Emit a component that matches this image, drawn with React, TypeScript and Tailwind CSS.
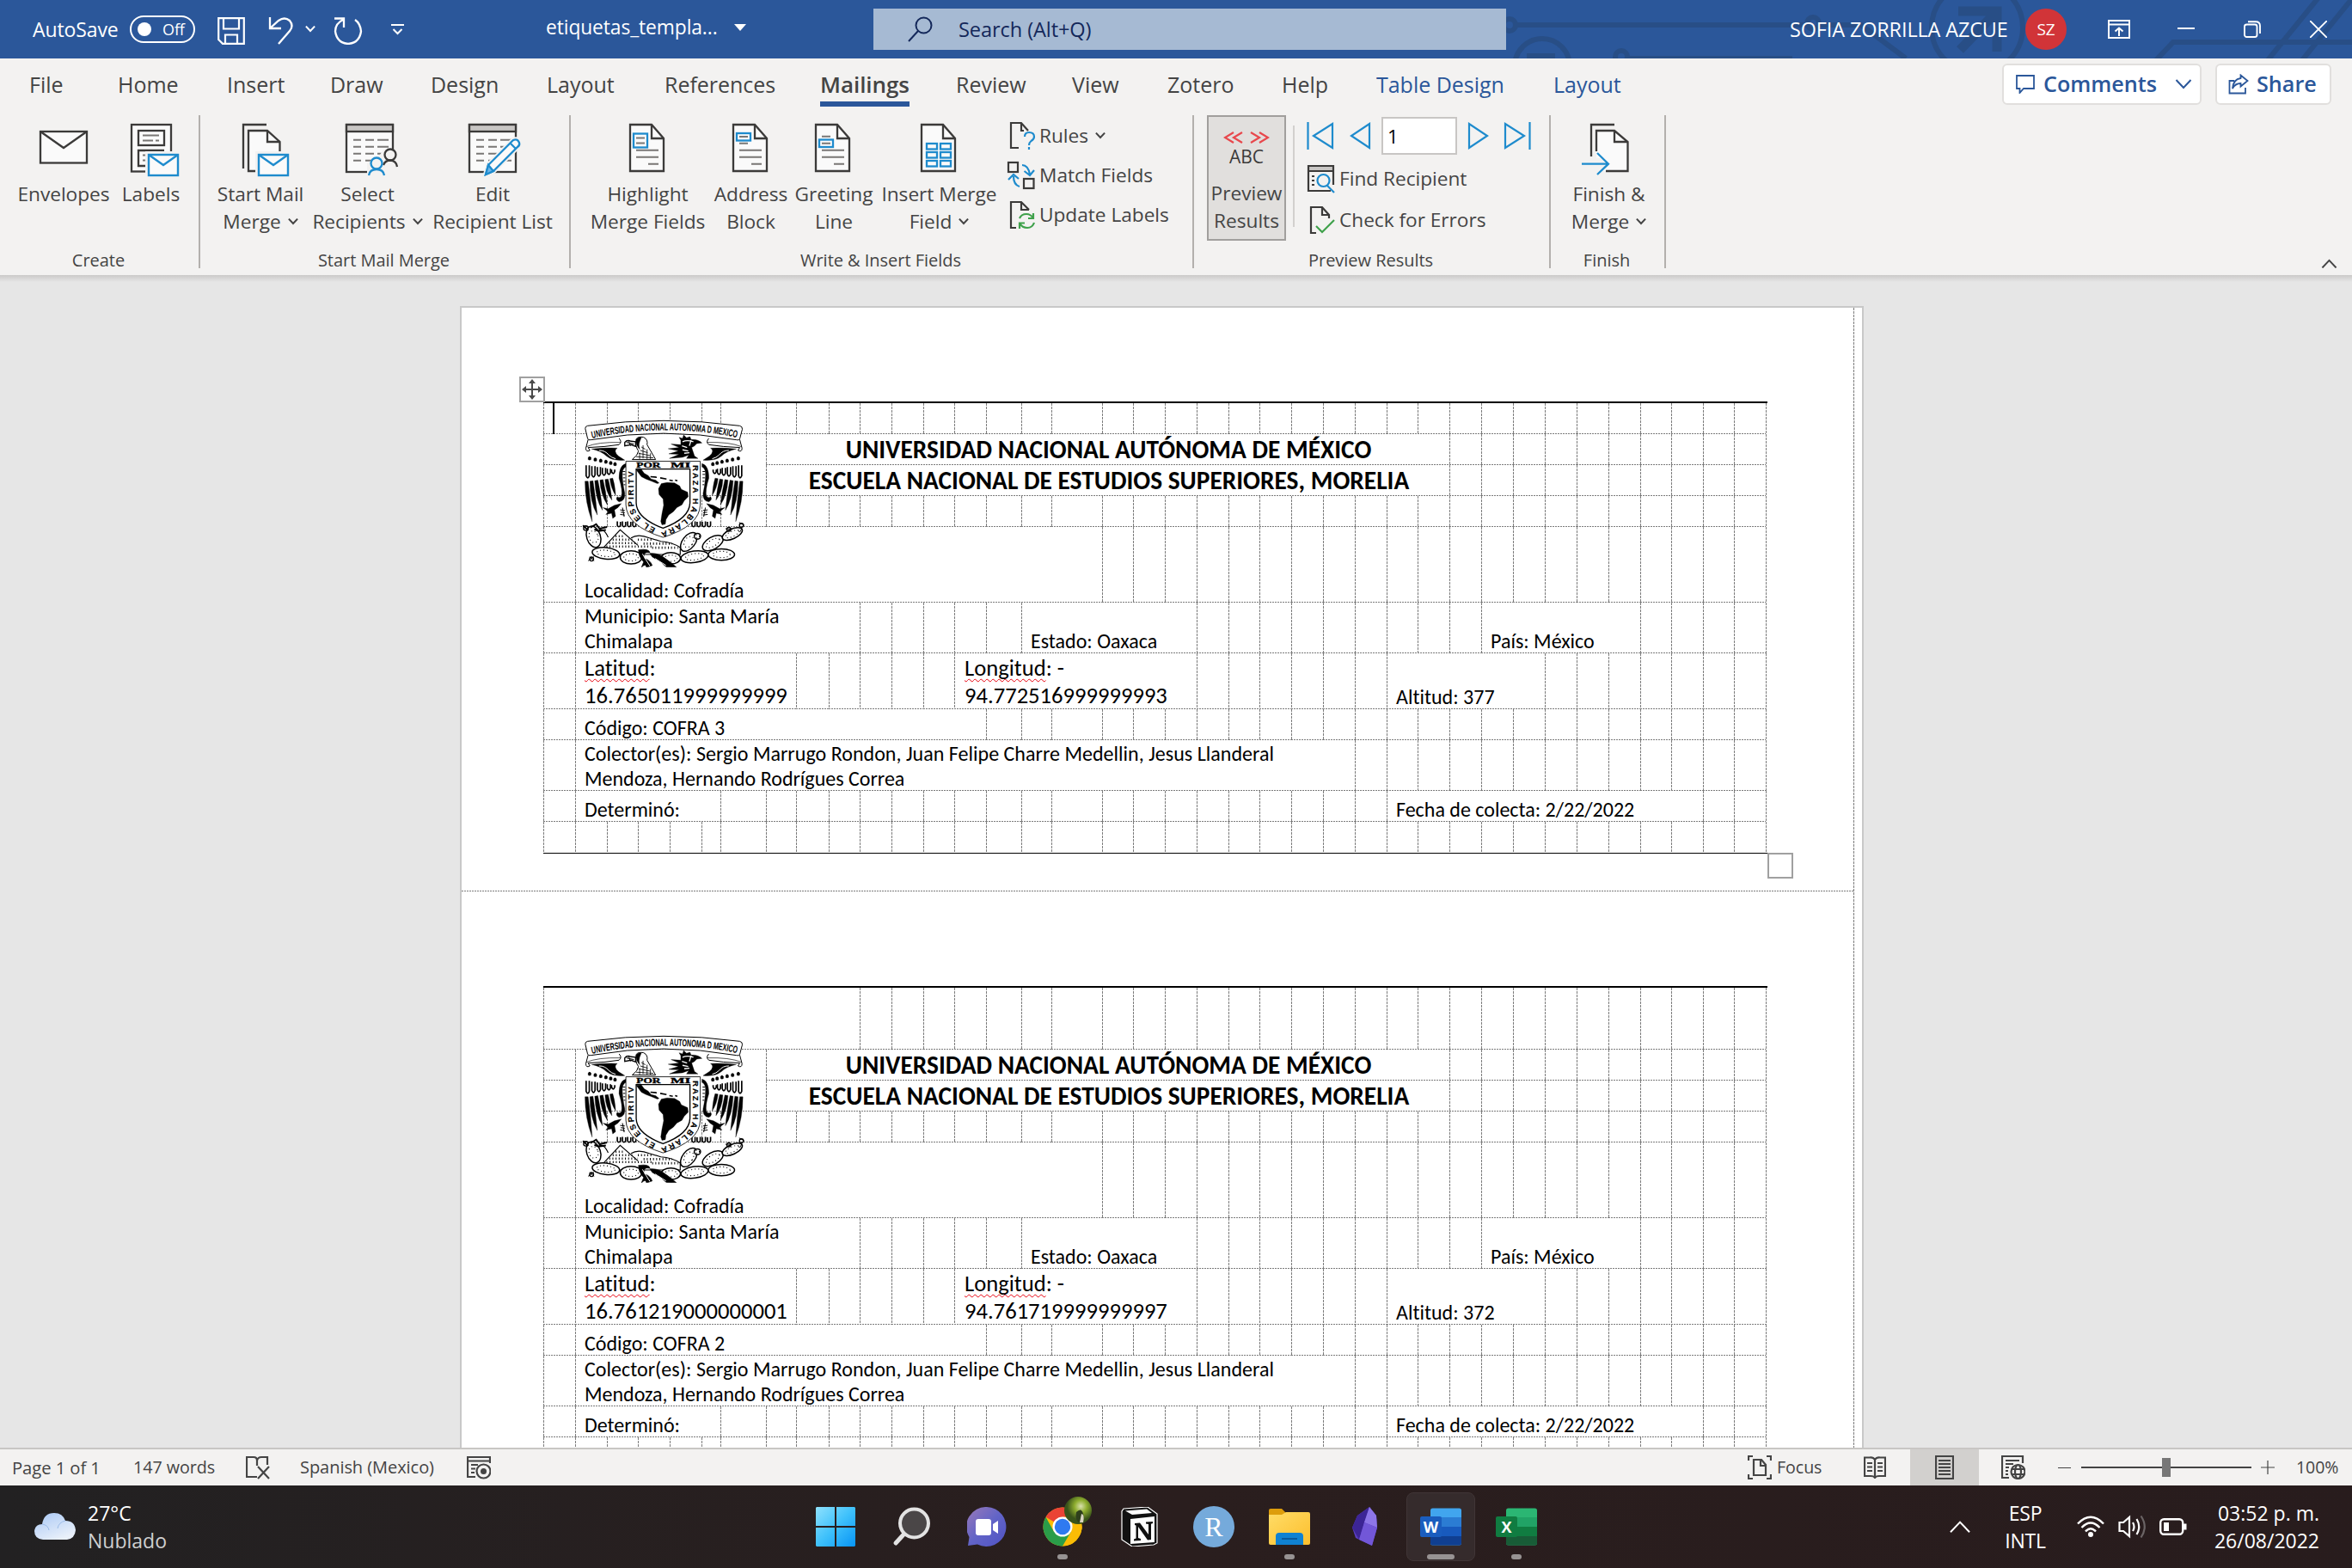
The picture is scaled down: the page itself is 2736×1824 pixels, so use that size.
import React from "react";

const INK = "#3b3a39";
const BLUE = "#1e8bcd";
const PAPER = "#fafafa";

/* ---------- shared pieces ---------- */

function Chevron({ className = "", up = false, w = 12 }: { className?: string; up?: boolean; w?: number }) {
  return (
    <svg className={className} width={w} height={w * 0.6} viewBox="0 0 20 12" fill="none" stroke="currentColor" strokeWidth={40 / w}>
      <path d={up ? "M1.5 11 10 2l8.500 9" : "M1.500 1 10 10l8.500-9"} />
    </svg>
  );
}

function MiniEnvelope({ x, y }: { x: number; y: number }) {
  return (
    <g transform={`translate(${x} ${y})`} stroke={BLUE} strokeWidth="2.4" fill={PAPER}>
      <rect x="-3" y="-3" width="42" height="32" fill="#f3f2f1" stroke="none" />
      <rect x="1" y="1" width="34" height="24" />
      <path d="M1 1 18 13 35 1" fill="none" />
    </g>
  );
}

function BigIcon({ children }: { children: React.ReactNode }) {
  return (
    <svg width="64" height="64" viewBox="0 0 64 64" className="shrink-0 overflow-visible" fill="none" stroke={INK} strokeWidth="2.300">
      {children}
    </svg>
  );
}

function DocShape() {
  return (
    <>
      <path d="M11 3H36L50 19V57H11Z" fill={PAPER} />
      <path d="M36 3V19H50" />
    </>
  );
}

function ListShape({ x }: { x: number }) {
  return (
    <g transform={`translate(${x} 0)`}>
      <rect x="1" y="3" width="54" height="55" fill={PAPER} />
      <rect x="1" y="3" width="54" height="8" fill="#c8c6c4" />
      <g stroke="#797775" strokeWidth="2">
        {[20.700, 28.700, 36.700, 44.700].map((y) => (
          <path key={y} d={`M9 ${y}H18M23 ${y}H33M37 ${y}H50`} />
        ))}
      </g>
    </g>
  );
}

const icons: Record<string, React.ReactNode> = {
  envelope: (
    <BigIcon>
      <rect x="5" y="11" width="54" height="36.500" fill={PAPER} />
      <path d="M5 11 32 30 59 11" />
    </BigIcon>
  ),
  labels: (
    <BigIcon>
      <rect x="9" y="3" width="46" height="54.500" fill={PAPER} />
      <rect x="17" y="10" width="30" height="17" />
      <path d="M47 33H17V51H28" />
      <path d="M22 15.500H41M22 21.500H34M37 21.500H41M22 38.500H28M22 44.500H28" stroke="#797775" strokeWidth="2" />
      <MiniEnvelope x={28} y={37} />
    </BigIcon>
  ),
  startMerge: (
    <BigIcon>
      <path d="M39 3H12V54" />
      <path d="M18 10H40L54.500 23V57H18Z" fill={PAPER} />
      <path d="M40 10V23H54.500" />
      <MiniEnvelope x={29} y={37} />
    </BigIcon>
  ),
  recipients: (
    <BigIcon>
      <ListShape x={6} />
      <path d="M50 32H72V60H31V48L46 38Z" fill="#f3f2f1" stroke="none" />
      <circle cx="58" cy="38" r="6.500" />
      <path d="M50 50Q52 44.500 58 44.500Q65 45 66 52" />
      <g stroke={BLUE}>
        <circle cx="42" cy="48" r="6.500" fill="#f3f2f1" />
        <path d="M33 62Q34 55 42 55Q50 55 51 62" />
      </g>
    </BigIcon>
  ),
  editList: (
    <BigIcon>
      <ListShape x={4} />
      <path d="M24 61 27 50 56 21Q61 19 63 24Q64 27 61 29L33 57Z" fill={PAPER} stroke="#f3f2f1" strokeWidth="6" />
      <path d="M24 61 27 50 56 21Q61 19 63 24Q64 27 61 29L33 57Z" fill={PAPER} stroke={BLUE} />
      <path d="M24 61 27 50 33 57Z" fill="#6cb5e8" stroke={BLUE} />
      <path d="M53 25 59 31" stroke={BLUE} />
    </BigIcon>
  ),
  highlight: (
    <BigIcon>
      <DocShape />
      <path d="M18 18.500H28M18 24.500H28M18 32.700H44M18 40.700H44M32 48.700H44" stroke="#797775" strokeWidth="2" />
      <rect x="15" y="13.500" width="16" height="16" stroke={BLUE} />
    </BigIcon>
  ),
  address: (
    <BigIcon>
      <DocShape />
      <path d="M18 17H28M18 24.700H28M18 32.700H44M18 40.700H44M32 48.700H44" stroke="#797775" strokeWidth="2" />
      <rect x="15" y="13" width="16" height="8.500" stroke={BLUE} />
    </BigIcon>
  ),
  greeting: (
    <BigIcon>
      <DocShape />
      <path d="M18 16.700H28M18 24.700H28M18 32.700H44M18 40.700H44M32 48.700H44" stroke="#797775" strokeWidth="2" />
      <rect x="15" y="20.500" width="16" height="8.500" stroke={BLUE} />
    </BigIcon>
  ),
  insertField: (
    <BigIcon>
      <DocShape />
      <g stroke={BLUE}>
        {[25, 35, 45].map((y) => (
          <React.Fragment key={y}>
            <rect x="17" y={y} width="12" height="6.500" />
            <rect x="33" y={y} width="12" height="6.500" />
          </React.Fragment>
        ))}
      </g>
    </BigIcon>
  ),
  finish: (
    <BigIcon>
      <path d="M38 3H11V40" />
      <path d="M17 10H38L53.500 23V57H17Z" fill={PAPER} stroke="none" />
      <path d="M17 34V10H38L53.500 23V57H28M38 10V23H53.500" />
      <path d="M10 42H22L32 49 22 60H10Z" fill="#f3f2f1" stroke="none" />
      <path d="M0 48.700H31M18 36 31 48.700 18 61" stroke={BLUE} />
    </BigIcon>
  ),
};

/* ---------- title bar ---------- */

function TitleBar() {
  return (
    <header className="relative flex h-[68px] shrink-0 items-center bg-[#2b579a] text-[23px] tracking-[-0.1px] text-white">
      <svg className="absolute right-0 top-0" width="1036" height="68" viewBox="1700 0 1036 68" fill="none" stroke="#284e86" strokeWidth="6">
        <circle cx="1756" cy="29" r="7" />
        <path d="M1765 29H2101M2118 29H2165L2217 68" />
        <circle cx="2109" cy="27" r="7" />
        <circle cx="1794" cy="77" r="32" />
        <path d="M1776 65H1809" />
        <circle cx="1886" cy="66" r="7" />
        <path d="M1895 68H2085" />
        <circle cx="2300" cy="32" r="53" />
        <path d="M2278 13H2323V60M2323 13 2280 58" strokeWidth="11" />
        <path d="M2508 70 2528 49H2736M2638 70 2698 -4M2678 70 2738 -4" />
      </svg>
      <div className="relative flex w-[1016px] items-center">
        <span className="ml-[38px] w-[113px]">AutoSave</span>
        <span className="flex h-8 w-[76px] items-center rounded-full border-2 border-white pl-[7px] text-[18px]">
          <span className="size-4 rounded-full bg-white" />
          <span className="ml-[13px]">Off</span>
        </span>
        <svg className="ml-[26px] mt-1" width="32" height="32" viewBox="0 0 32 32" fill="none" stroke="white" strokeWidth="2.200">
          <path d="M1.200 1.200H30.800V30.800H6L1.200 26ZM7 1.200V13.500H25V1.200M9 30.800V20.500H23V30.800" />
        </svg>
        <svg className="ml-[27px] mt-1" width="30" height="32" viewBox="0 0 30 32" fill="none" stroke="white" strokeWidth="2.300">
          <path d="M2 0V13H15M2 13 12 4Q19-1 25 4Q30 10 25 16L12 31" />
        </svg>
        <Chevron className="ml-[13px]" />
        <svg className="ml-[21px] mt-1" width="34" height="32" viewBox="0 0 34 32" fill="none" stroke="white" strokeWidth="2.300">
          <path d="M1 1.500H12V12M12 2.500Q2 7 2 16.500Q4 30 17 31Q30 30 32 16.500Q31 7 25 3" />
        </svg>
        <svg className="ml-[33px]" width="15" height="13" viewBox="0 0 15 13" fill="none" stroke="white" strokeWidth="2">
          <path d="M0 1H15M2.500 6 7.500 11 12.500 6" />
        </svg>
        <span className="-mt-1 ml-[165px] w-[219px] text-[22.800px]">etiquetas_templa...</span>
        <svg width="14" height="8" viewBox="0 0 14 8" className="-mt-1" fill="white">
          <path d="M0 0H14L7 8Z" />
        </svg>
      </div>
      <div className="relative flex h-12 w-[736px] items-center bg-[#a6bad3] pl-10 text-[#14285a]">
        <svg width="30" height="30" viewBox="0 0 30 30" fill="none" stroke="currentColor" strokeWidth="2">
          <circle cx="18.500" cy="10.500" r="9" />
          <path d="M12 17 1 29" />
        </svg>
        <span className="ml-[29px] pt-px text-[23.600px]">Search (Alt+Q)</span>
      </div>
      <div className="relative flex flex-1 items-center pl-[330px]">
        <span className="w-[274px] pt-[2px] text-[23.400px]">SOFIA ZORRILLA AZCUE</span>
        <span className="flex size-12 items-center justify-center rounded-full bg-[#d13438] text-[19px]">SZ</span>
        <svg className="ml-12" width="26" height="22" viewBox="0 0 26 22" fill="none" stroke="white" strokeWidth="2">
          <path d="M1 1H25V21H1ZM1 5.500H25M13 19V9.500M8.500 13.500 13 9.500 17.500 13.500" />
        </svg>
        <svg className="ml-[55px]" width="20" height="20" viewBox="0 0 20 20" stroke="white" strokeWidth="2">
          <path d="M0 9H20" />
        </svg>
        <svg className="ml-[57px]" width="20" height="20" viewBox="0 0 20 20" fill="none" stroke="white" strokeWidth="1.900">
          <rect x="1" y="4.500" width="14.500" height="14.500" rx="2.500" />
          <path d="M5 1.200H14Q19 1.200 19 6V15" />
        </svg>
        <svg className="ml-[57px]" width="20" height="20" viewBox="0 0 20 20" stroke="white" strokeWidth="1.900">
          <path d="M0 0 20 20M20 0 0 20" />
        </svg>
      </div>
    </header>
  );
}

/* ---------- ribbon ---------- */

const tabs = [
  { name: "File", w: "w-[103px]" },
  { name: "Home", w: "w-[127px]" },
  { name: "Insert", w: "w-[120px]" },
  { name: "Draw", w: "w-[117px]" },
  { name: "Design", w: "w-[135px]" },
  { name: "Layout", w: "w-[137px]" },
  { name: "References", w: "w-[181px]" },
  { name: "Mailings", w: "w-[158px]" },
  { name: "Review", w: "w-[135px]" },
  { name: "View", w: "w-[111px]" },
  { name: "Zotero", w: "w-[133px]" },
  { name: "Help", w: "w-[110px]" },
  { name: "Table Design", w: "w-[206px]" },
  { name: "Layout", w: "w-[100px]" },
];

function TabRow() {
  return (
    <nav className="flex h-[62px] items-center pl-[34px] text-[25px] tracking-[-0.020px] text-[#444]">
      {tabs.map((t, i) => (
        <div key={i} className={`${t.w} flex h-full shrink-0 items-start pt-[11px]`}>
          {t.name === "Mailings" ? (
            <span className="flex flex-col text-[26px] font-semibold leading-[39px] tracking-[-0.050px]">
              {t.name}
              <span className="h-[6px] bg-[#2b579a]" />
            </span>
          ) : (
            <span className={i > 11 ? "leading-[38px] text-[#2b579a]" : "leading-[38px]"}>{t.name}</span>
          )}
        </div>
      ))}
      <div className="-mt-[2px] ml-auto mr-6 flex gap-4 text-[25.200px] font-semibold text-[#2b579a]">
        <div className="flex h-12 w-[232px] items-center rounded-md border-2 border-[#e1dfdd] bg-white pl-[14px]">
          <svg width="22" height="22" viewBox="0 0 22 22" fill="none" stroke="currentColor" strokeWidth="1.800">
            <path d="M1 1H21V16H9L4.500 21V16H1Z" />
          </svg>
          <span className="ml-[10px] w-[153px]">Comments</span>
          <Chevron w={20} />
        </div>
        <div className="flex h-12 w-[135px] items-center rounded-md border-2 border-[#e1dfdd] bg-white pl-[13px]">
          <svg width="24" height="24" viewBox="0 0 24 24" fill="none" stroke="currentColor" strokeWidth="1.800">
            <path d="M7 8H1.500V22.500H20V16M14.500 1.500 22.500 8 14.500 14.500V11Q8 11 5 17Q6 6 14.500 5Z" />
          </svg>
          <span className="ml-[9px]">Share</span>
        </div>
      </div>
    </nav>
  );
}

function BigButton({ icon, lines, w, menu }: { icon: string; lines: string[]; w: string; menu?: boolean }) {
  return (
    <div className={`${w} flex shrink-0 flex-col items-center pt-[8px]`}>
      {icons[icon]}
      <div className="mt-[4px] flex flex-col items-center whitespace-nowrap leading-[32px]">
        {lines.map((l, i) => (
          <span key={l} className="flex items-center gap-[8px]">
            {l}
            {menu && i === lines.length - 1 && <Chevron />}
          </span>
        ))}
      </div>
    </div>
  );
}

function Group({ label, w, children }: { label: string; w: string; children: React.ReactNode }) {
  return (
    <section className={`${w} mt-[2px] flex h-[178px] shrink-0 flex-col border-r-2 border-[#b3b0ad]`}>
      <div className="flex h-[150px] shrink-0 pl-[15px]">{children}</div>
      <div className="-ml-[2px] shrink-0 pt-[6px] text-center text-[20px] leading-[26px] tracking-[-0.030px]">{label}</div>
    </section>
  );
}

function SmallButton({ icon, label, menu }: { icon: React.ReactNode; label: string; menu?: boolean }) {
  return (
    <div className="flex items-center">
      <svg width="34" height="34" viewBox="0 0 34 34" className="shrink-0" fill="none" stroke={INK} strokeWidth="2.200">
        {icon}
      </svg>
      <span className="ml-[4px] whitespace-nowrap">{label}</span>
      {menu && <Chevron className="ml-[8px]" />}
    </div>
  );
}

function Ribbon() {
  return (
    <div className="relative h-[252px] shrink-0 bg-[#f3f2f1]">
      <TabRow />
      <div className="flex h-[190px] pt-[2px] text-[22.700px] tracking-[-0.030px] text-[#444]">
        <Group label="Create" w="w-[233px]">
          <BigButton icon="envelope" lines={["Envelopes"]} w="w-[118px]" />
          <BigButton icon="labels" lines={["Labels"]} w="w-[85px]" />
        </Group>
        <Group label="Start Mail Merge" w="w-[431px]">
          <BigButton icon="startMerge" lines={["Start Mail", "Merge"]} w="w-[110px]" menu />
          <BigButton icon="recipients" lines={["Select", "Recipients"]} w="w-[139px]" menu />
          <BigButton icon="editList" lines={["Edit", "Recipient List"]} w="w-[152px]" />
        </Group>
        <Group label="Write & Insert Fields" w="w-[725px]">
          <BigButton icon="highlight" lines={["Highlight", "Merge Fields"]} w="w-[149px]" />
          <BigButton icon="address" lines={["Address", "Block"]} w="w-[91px]" />
          <BigButton icon="greeting" lines={["Greeting", "Line"]} w="w-[102px]" />
          <BigButton icon="insertField" lines={["Insert Merge", "Field"]} w="w-[143px]" menu />
          <div className="ml-[7px] flex flex-col gap-3 pt-[7px]">
            <SmallButton
              label="Rules"
              menu
              icon={
                <>
                  <path d="M14 31H5V2H17L25 11M17 2V11H20" />
                  <path d="M21 18Q21 13 26 13Q32 13 32 18Q32 21 28.500 23Q26 25 26 28M26 30V33" stroke={BLUE} />
                </>
              }
            />
            <SmallButton
              label="Match Fields"
              icon={
                <>
                  <rect x="2" y="2" width="11" height="11" />
                  <rect x="20" y="21" width="11.500" height="11" />
                  <path d="M18 5Q25 5 27 16M20.500 12 27 17 32 11M15 30Q8 28 8 18M2 22 8 16 14 21" stroke={BLUE} />
                </>
              }
            />
            <SmallButton
              label="Update Labels"
              icon={
                <>
                  <path d="M11 32H5V2H17L26 11M17 2V11H26" />
                  <path d="M15 21Q17 16 23 16Q28 16 31 21M31 15V21H25M32 26Q30 32 24 32Q18 32 15.500 27M15 33V26.500H21" stroke="#3fa14b" />
                </>
              }
            />
          </div>
        </Group>
        <Group label="Preview Results" w="w-[415px]">
          <div className="flex h-[146px] w-[92px] shrink-0 flex-col items-center border-2 border-[#a19f9d] bg-[#e1dfdd] leading-[32px]">
            <svg className="mt-[17px]" width="54" height="14" viewBox="0 0 54 14" fill="none" stroke="#e8474c" strokeWidth="2.200">
              <path d="M12 1 2 7 12 13M22 1 12 7 22 13M32 1 42 7 32 13M42 1 52 7 42 13" />
            </svg>
            <span className="text-[21px] leading-[30px] text-[#3b3a39]">ABC</span>
            <span className="mt-[12px]">Preview</span>
            <span>Results</span>
          </div>
          <div className="ml-[8px] mt-[12px] h-[118px] w-[2px] bg-[#d2d0ce]" />
          <div className="ml-[14px] flex flex-col">
            <div className="mt-px flex h-[46px] items-center">
              <svg width="32" height="32" viewBox="0 0 32 32" fill="none" stroke={BLUE} strokeWidth="2.200">
                <path d="M1.500 0V32M30 2V30L8 16Z" />
              </svg>
              <svg className="ml-[17px]" width="26" height="32" viewBox="0 0 26 32" fill="none" stroke={BLUE} strokeWidth="2.200">
                <path d="M24 2V30L3 16Z" />
              </svg>
              <div className="ml-[12px] flex h-[44px] w-[88px] items-center border-2 border-[#c8c6c4] bg-white pl-[5px] text-[22px] text-black">1</div>
              <svg className="ml-[12px]" width="26" height="32" viewBox="0 0 26 32" fill="none" stroke={BLUE} strokeWidth="2.200">
                <path d="M2 2V30L23 16Z" />
              </svg>
              <svg className="ml-[16px]" width="32" height="32" viewBox="0 0 32 32" fill="none" stroke={BLUE} strokeWidth="2.200">
                <path d="M30.500 0V32M2 2V30L24 16Z" />
              </svg>
            </div>
            <div className="mt-[10px]">
              <SmallButton
                label="Find Recipient"
                icon={
                  <>
                    <path d="M3 3H30V7H3Z" fill="#c8c6c4" stroke="none" />
                    <path d="M2 2H31V8H2ZM2 8V31H28M31 8V24" />
                    <path d="M6 14H9M6 19H9M6 24H9" strokeWidth="2" />
                    <path d="M24 25 32 33" stroke={BLUE} />
                    <circle cx="19.500" cy="19" r="7" stroke={BLUE} />
                  </>
                }
              />
            </div>
            <div className="mt-[14px]">
              <SmallButton
                label="Check for Errors"
                icon={
                  <>
                    <path d="M11 32H5V2H18L26 11V15M18 2V11H26" />
                    <path d="M11 24 18 31 32 17" stroke="#3fa14b" />
                  </>
                }
              />
            </div>
          </div>
        </Group>
        <Group label="Finish" w="w-[134px]">
          <BigButton icon="finish" lines={["Finish &", "Merge"]} w="w-[105px]" menu />
        </Group>
      </div>
      <Chevron up w={19} className="absolute bottom-[8px] right-[17px] text-[#444]" />
      <div className="absolute inset-x-0 top-full h-[8px] bg-linear-to-b from-[#cbcac9] to-[#e6e6e6]" />
    </div>
  );
}

/* ---------- university crest ---------- */

function Wing() {
  const shortFeathers = [176, 196, 215, 233, 250, 265];
  const long = [
    "M165 296Q165 370 190 437Q186 370 176 296Z",
    "M182 296Q182 370 208 414Q202 350 193 294Z",
    "M199 294Q202 360 226 397Q220 338 210 292Z",
    "M217 292Q220 345 243 378Q238 330 228 290Z",
    "M235 290Q237 335 259 362Q255 320 246 288Z",
    "M252 287Q255 320 272 345Q270 310 262 285Z",
  ];
  return (
    <g>
      <path d="M176 150 168 180Q168 196 182 188L176 178Q235 176 284 168Q296 158 284 146" fill="white" strokeWidth="3" />
      <path d="M170 175Q210 158 290 160" strokeWidth="2" fill="none" />
      <path d="M188 183Q240 178 278 180Q262 190 282 208L304 222Q262 226 240 208Q222 190 188 183Z" fill="black" />
      <path d="M214 188Q236 188 248 204Q258 214 272 217" stroke="white" strokeWidth="3" fill="none" />
      {shortFeathers.map((x, i) => (
        <path key={x} d={`M${x} ${213 + i * 4}q5-7 10 0v7q-5 4-10 0z`} fill="black" />
      ))}
      {shortFeathers.map((x, i) => (
        <path key={x} d={`M${x - 7} ${240 + i * 3}V${277 - i * 3}q6 14 11 0V${240 + i * 3}`} fill="none" strokeWidth="5" />
      ))}
      {long.map((d) => (
        <path key={d} d={d} fill="black" strokeWidth="1" />
      ))}
      <path d="M308 234Q284 240 284 285Q298 330 292 348Q284 356 278 350Q270 360 284 368Q306 366 304 338Q294 290 296 262Q300 248 308 246Z" fill="black" />
      <path d="M296 262H306M297 272H306M298 284H306M299 296H306M300 308H306" strokeWidth="3" />
      <path d="M228 388 246 392 268 380 292 374 280 388 268 396 272 418 262 426 258 408 238 412 246 402Z" fill="black" />
      <path d="M288 396 304 398M290 404 304 406M288 412 304 414M296 388 302 420" strokeWidth="3" />
      {[278, 296, 314, 332].map((x) => (
        <path key={x} d={`M${x} 436V450q5 10 11 0V438`} fill="none" strokeWidth="5" />
      ))}
    </g>
  );
}

function Pad({ cx, cy, rx, ry, r = 0 }: { cx: number; cy: number; rx: number; ry: number; r?: number }) {
  return (
    <g transform={`rotate(${r} ${cx} ${cy})`}>
      <ellipse cx={cx} cy={cy} rx={rx} ry={ry} fill="white" strokeWidth="4.500" />
      <ellipse cx={cx} cy={cy} rx={rx * 0.66} ry={ry * 0.55} fill="none" strokeWidth="3.500" strokeDasharray="3 9" />
    </g>
  );
}

function Crest({ id }: { id: string }) {
  return (
    <svg width="190" height="173" viewBox="155 80 570 520" className="block" fill="none" stroke="black">
      <defs>
        <path id={`${id}-banner`} d="M190 146Q440 90 700 144" />
        <path id={`${id}-motto`} d="M541 240V374Q538 432 438 472Q341 434 335 374V236" />
        <clipPath id={`${id}-clip`}>
          <rect x="155" y="80" width="570" height="516" />
        </clipPath>
      </defs>
      <Wing />
      <g transform="translate(882 0) scale(-1 1)">
        <Wing />
      </g>
      <path d="M166 112Q165 104 174 102Q440 66 706 102Q716 104 715 114L706 148Q702 154 694 151Q440 106 186 151Q176 154 174 146Z" fill="white" strokeWidth="3" />
      <text fontFamily="'Liberation Sans'" fontSize="35" fontWeight="700" fill="black" stroke="none">
        <textPath href={`#${id}-banner`} textLength="510" lengthAdjust="spacingAndGlyphs">
          UNIVERSIDAD NACIONAL AUTONOMA D MEXICO
        </textPath>
      </text>
      {/* condor, facing left */}
      <path d="M344 148Q352 138 370 142Q386 150 382 168L412 220H330Q350 206 352 190Q340 176 344 148Z" fill="white" strokeWidth="3" />
      <path d="M344 150Q350 140 362 143L356 158Q352 168 356 184Q342 170 344 150Z" fill="black" />
      <path d="M304 160Q312 150 326 156L342 158V174L326 168 304 172Z" fill="white" strokeWidth="4" />
      <path d="M310 160 336 166M318 156 324 172" strokeWidth="3" />
      <path d="M362 176 376 184M358 188 384 196M352 198 392 206M344 210 404 214M368 170V216M382 184V218M356 196V218M394 198V218" strokeWidth="2.500" />
      {/* eagle, facing right */}
      <path d="M500 152 494 142 506 146 510 134 520 144 532 140 536 150Q560 148 574 162L556 164Q546 176 538 178L548 208 560 216H520L528 204 506 212 460 216 494 202 458 200 492 190 456 182 494 178 466 166 500 168Z" fill="black" />
      <path d="M506 158Q522 150 544 158M504 172 522 178M506 186 526 190M512 198 530 196M536 152 530 172" stroke="white" strokeWidth="4" />
      {/* shield */}
      <path d="M308 226H568V378Q566 452 438 492Q310 452 308 378Z" fill="white" strokeWidth="2.500" />
      <path d="M344 253H532V372Q530 426 438 460Q346 426 344 372Z" strokeWidth="4" />
      <g fontFamily="'Liberation Serif'" fontSize="24" fontWeight="700" fill="black" stroke="black" strokeWidth="1">
        <text x="345" y="248" textLength="84" lengthAdjust="spacingAndGlyphs">
          POR
        </text>
        <text x="464" y="248" textLength="70" lengthAdjust="spacingAndGlyphs">
          MI
        </text>
      </g>
      <text fontFamily="'Liberation Sans'" fontSize="28" fontWeight="700" fill="black" stroke="black" strokeWidth="0.500">
        <textPath href={`#${id}-motto`} textLength="545" lengthAdjust="spacing">
          RAZA HABLARA EL ESPIRITV
        </textPath>
      </text>
      <path d="M344 256 362 254 372 268 386 276 396 288 412 292 424 302 418 304 398 296 378 288 362 280Z" fill="black" />
      <path d="M394 280 416 282M428 284 450 288M460 292 472 294M480 292 488 294" strokeWidth="5" />
      <path d="M432 304 452 300 478 302 496 312 502 324 524 334 526 350 512 364 504 378 486 388 474 402 458 414 448 430 446 446 434 448 430 436 434 410 440 380 438 358 424 342 422 322Z" fill="black" />
      {/* hills and cactus */}
      <g clipPath={`url(#${id}-clip)`}>
        <path d="M212 470Q230 456 246 492M228 530 288 466 350 520M326 494Q350 478 390 494L430 506Q470 508 498 528V552H220" fill="white" strokeWidth="3.500" />
        <path d="M272 488H304M262 500H330M250 512H350M240 524H400M350 500H400M370 514H470M400 528H490" strokeWidth="8" strokeDasharray="3 8" />
        <Pad cx={195} cy={490} rx={24} ry={38} r={-18} />
        <Pad cx={528} cy={508} rx={22} ry={38} r={38} />
        <Pad cx={558} cy={488} rx={11} ry={10} />
        <Pad cx={612} cy={512} rx={40} ry={21} r={-30} />
        <Pad cx={680} cy={480} rx={38} ry={17} r={-25} />
        <Pad cx={238} cy={548} rx={48} ry={20} r={6} />
        <Pad cx={326} cy={562} rx={38} ry={23} />
        <Pad cx={465} cy={565} rx={34} ry={20} />
        <Pad cx={548} cy={560} rx={48} ry={20} r={-8} />
        <Pad cx={642} cy={552} rx={46} ry={20} />
        <path d="M352 536Q390 530 392 546Q366 540 372 566Q392 570 400 590L380 598Q378 580 362 598L370 578Q352 560 352 536ZM400 560 430 578 450 596 486 598 468 582 440 562Q420 546 392 548Z" fill="black" strokeWidth="2" />
        <path d="M366 550Q380 574 392 592M410 566 448 590" stroke="white" strokeWidth="3" />
        <circle cx="168" cy="460" r="8" strokeWidth="4" />
        <path d="M158 450 176 468M184 458 204 446 216 462 242 456M198 464 212 470 238 466" strokeWidth="6" />
        <circle cx="188" cy="568" r="7" strokeWidth="4" />
        <path d="M176 574 196 560M182 560 196 574" strokeWidth="3" />
        <circle cx="668" cy="464" r="7" strokeWidth="4" />
        <circle cx="712" cy="450" r="7" strokeWidth="4" />
        <path d="M656 462 678 462M704 440 722 450M714 460 706 474" strokeWidth="3" />
      </g>
    </svg>
  );
}

/* ---------- document ---------- */

type Cell = { span: number; body?: React.ReactNode; open?: boolean; extra?: string };
type Row = { h: string; cells: Cell[] };

const ones = (n: number): Cell[] => Array.from({ length: n }, () => ({ span: 1 }));

const V = "bg-[repeating-linear-gradient(to_bottom,#7c7c7c_0_3px,transparent_3px_4px)]";
const H = "bg-[repeating-linear-gradient(to_right,#7c7c7c_0_2px,transparent_2px_3px)]";

function GridRow({ row, last }: { row: Row; last: boolean }) {
  return (
    <div
      className={`${row.h} grid grid-cols-[37px_37px_36px_37px_37px_22px_53px_35px_38px_36px_37px_37px_36px_37px_41px_35px_59px_36px_37px_37px_37px_36px_37px_37px_37px_37px_36px_37px_37px_37px_37px_37px_37px_37px_36px_37px_36px_38px]`}
    >
      {row.cells.map((c, i) => (
        <div key={i} className="flex min-w-0" style={{ gridColumn: `span ${c.span}` }}>
          <div className={`w-px shrink-0 ${V}`} />
          <div className="flex min-w-0 flex-1 flex-col">
            <div className={`flex min-h-0 flex-1 flex-col justify-end whitespace-nowrap ${c.extra ?? "pl-[10px]"}`}>{c.body}</div>
            {!last && !c.open && <div className={`-ml-px -mt-px h-px shrink-0 ${H}`} />}
          </div>
          {i === row.cells.length - 1 && <div className={`w-px shrink-0 ${V}`} />}
        </div>
      ))}
    </div>
  );
}

type Label = { id: string; lat: string; lon: string; alt: string; code: string; top: string; first: Row };

function LabelTable({ d }: { d: Label }) {
  const coord = "text-[26.600px] leading-[32px]";
  const squiggle = "underline decoration-red-600 decoration-wavy decoration-1 underline-offset-[3px] [text-decoration-skip-ink:none]";
  const rows: Row[] = [
    d.first,
    {
      h: "h-[36px]",
      cells: [
        { span: 1 },
        {
          span: 6,
          open: true,
          extra: "relative",
          body: (
            <div className="absolute left-[7px] top-[-17px]">
              <Crest id={d.id} />
            </div>
          ),
        },
        {
          span: 21,
          extra: "items-center",
          body: <b className="pl-px text-[29.400px] leading-[35px]">UNIVERSIDAD NACIONAL AUTÓNOMA DE MÉXICO</b>,
        },
        ...ones(10),
      ],
    },
    {
      h: "h-[36px]",
      cells: [
        { span: 1 },
        { span: 6 },
        {
          span: 21,
          extra: "items-center",
          body: <b className="pl-[2px] text-[29.400px] leading-[35px]">ESCUELA NACIONAL DE ESTUDIOS SUPERIORES, MORELIA</b>,
        },
        ...ones(10),
      ],
    },
    { h: "h-[36px]", cells: ones(38) },
    { h: "h-[88px]", cells: [{ span: 1 }, { span: 16, body: "Localidad: Cofradía" }, ...ones(21)] },
    {
      h: "h-[59px]",
      cells: [
        { span: 1 },
        { span: 9, body: <><span>Municipio: Santa María</span><span>Chimalapa</span></> },
        ...ones(5),
        { span: 5, body: "Estado: Oaxaca" },
        ...ones(9),
        { span: 5, body: "País: México" },
        ...ones(4),
      ],
    },
    {
      h: "h-[65px]",
      cells: [
        { span: 1 },
        { span: 7, body: <div className={coord}><span className={squiggle}>Latitud</span>:<br />{d.lat}</div> },
        ...ones(5),
        { span: 7, extra: "pl-[11px]", body: <div className={coord}><span className={squiggle}>Longitud</span>: -<br />{d.lon}</div> },
        ...ones(6),
        { span: 5, body: `Altitud: ${d.alt}` },
        ...ones(7),
      ],
    },
    { h: "h-[36px]", cells: [{ span: 1 }, { span: 13, body: `Código: ${d.code}` }, ...ones(24)] },
    {
      h: "h-[59px]",
      cells: [
        { span: 1 },
        {
          span: 24,
          body: (
            <>
              <span className="tracking-[0.020px]">Colector(es): Sergio Marrugo Rondon, Juan Felipe Charre Medellin, Jesus Llanderal</span>
              <span>Mendoza, Hernando Rodrígues Correa</span>
            </>
          ),
        },
        ...ones(13),
      ],
    },
    {
      h: "h-[36px]",
      cells: [{ span: 1 }, { span: 5, body: "Determinó:" }, ...ones(20), { span: 10, body: "Fecha de colecta: 2/22/2022" }, ...ones(2)],
    },
    { h: "h-[36px]", cells: ones(38) },
  ];
  return (
    <div className={`${d.top} w-[1424px] border-b border-black`}>
      {rows.map((r, i) => (
        <GridRow key={i} row={r} last={i === rows.length - 1} />
      ))}
    </div>
  );
}

function Document() {
  return (
    <main className="flex h-[1364px] shrink-0 justify-start overflow-hidden bg-[#e6e6e6] pl-[535px] pt-[36px]">
      <div className="flex h-[1500px] w-[1633px] border-2 border-[#c8c8c8] bg-white font-[Calibri,Carlito,'Open_Sans',sans-serif] text-[24px] leading-[29px] text-black [font-variant-ligatures:none]">
        <div className="w-[1619px]">
          <div className="relative h-[678px] pl-[95px] pt-[109px]">
            <div className="absolute left-[67px] top-[80px] flex size-[30px] items-center justify-center border-2 border-[#a0a0a0] bg-white">
              <svg width="24" height="24" viewBox="0 0 24 24" stroke="#4a4a4a" fill="#4a4a4a" strokeWidth="2">
                <path d="M12 3V21M3 12H21" />
                <path stroke="none" d="M12 0 16 5H8ZM12 24 8 19H16ZM0 12 5 8V16ZM24 12 19 16V8Z" />
              </svg>
            </div>
            <div className="absolute left-[106px] top-[111px] h-[36px] w-[2px] bg-black" />
            <LabelTable
              d={{
                id: "a",
                lat: "16.765011999999999",
                lon: "94.772516999999993",
                alt: "377",
                code: "COFRA 3",
                top: "border-t-2",
                first: { h: "h-[36px]", cells: ones(38) },
              }}
            />
            <div className="absolute left-[1519px] top-[634px] size-[30px] border-2 border-[#a0a0a0] bg-white" />
          </div>
          <div className={`h-px ${H}`} />
          <div className="pl-[95px] pt-[110px]">
            <LabelTable
              d={{
                id: "b",
                lat: "16.761219000000001",
                lon: "94.761719999999997",
                alt: "372",
                code: "COFRA 2",
                top: "border-t-2",
                first: { h: "h-[72px]", cells: [{ span: 10 }, ...ones(28)] },
              }}
            />
          </div>
        </div>
        <div className={`w-px ${V}`} />
      </div>
    </main>
  );
}

/* ---------- status bar ---------- */

function StatusBar() {
  return (
    <footer className="flex h-[44px] shrink-0 items-center border-t-2 border-[#c8c6c4] bg-[#f3f2f1] text-[20px] tracking-[-0.050px] text-[#444]">
      <span className="ml-[14px] w-[141px] text-[20.200px]">Page 1 of 1</span>
      <span className="w-[131px] text-[19.700px]">147 words</span>
      <svg className="w-[28px]" height="28" viewBox="0 0 28 28" fill="none" stroke="#444" strokeWidth="2.200">
        <path d="M13 25H1V2H9Q13 2 13 6V12M13 6Q14 2 18 2H25V11M14 13 27 27M27 13 14 27" />
      </svg>
      <span className="ml-[35px] w-[194px]">Spanish (Mexico)</span>
      <svg width="28" height="28" viewBox="0 0 28 28" fill="none" stroke="#444" strokeWidth="2.200">
        <path d="M10 25H1V2H27V9M1 6.500H27M5 11H13M5 15.500H10M5 20H9" />
        <circle cx="19.500" cy="18.500" r="8" />
        <circle cx="19.500" cy="18.500" r="3.500" fill="#444" stroke="none" />
      </svg>
      <div className="ml-auto flex h-full items-center">
        <svg width="28" height="28" viewBox="0 0 28 28" fill="none" stroke="#444" strokeWidth="2.200">
          <path d="M6 1H1V6M22 1H27V6M1 22V27H6M27 22V27H22M7 5H16L21 11V23H7ZM15 5V12H21" />
        </svg>
        <span className="ml-[6px] w-[101px] text-[19.600px]">Focus</span>
        <svg width="26" height="26" viewBox="0 0 26 26" fill="none" stroke="#444" strokeWidth="2.200">
          <path d="M13 4Q11 1 7 1.500H1V23H8Q12 23 13 25Q14 23 18 23H25V1.500H19Q15 1 13 4ZM13 4V25M4 8H10M4 12.500H10M4 17H10M16 8H22M16 12.500H22M16 17H22" />
        </svg>
        <div className="ml-[28px] flex h-full w-[80px] items-center justify-center bg-[#d2d0ce]">
          <svg width="22" height="28" viewBox="0 0 22 28" fill="none" stroke="#444" strokeWidth="2.200">
            <path d="M1 1H21V27H1ZM4 6H18M4 10H18M4 14H18M4 18H18M4 22H18" />
          </svg>
        </div>
        <svg className="ml-[26px]" width="28" height="28" viewBox="0 0 28 28" fill="none" stroke="#444" strokeWidth="2.200">
          <path d="M9 26H1V1H25V9M5 6H21M5 10H14M5 14H9M5 18H8M5 22H8" />
          <circle cx="19.500" cy="19" r="8" />
          <ellipse cx="19.500" cy="19" rx="3.500" ry="8" />
          <path d="M12 16H27M12 22H27" strokeWidth="1.800" />
        </svg>
        <span className="ml-[38px] h-[1px] w-[15px] bg-[#444]" />
        <div className="ml-[12px] flex w-[198px] items-center">
          <span className="h-[2px] w-[94px] bg-[#444]" />
          <span className="h-[22px] w-[10px] bg-[#777]" />
          <span className="h-[2px] flex-1 bg-[#444]" />
        </div>
        <svg className="ml-[11px]" width="16" height="16" viewBox="0 0 16 16" stroke="#444" strokeWidth="1.200">
          <path d="M8 0V16M0 8H16" />
        </svg>
        <span className="ml-[25px] mr-[15px] w-[50px] text-[19.500px]">100%</span>
      </div>
    </footer>
  );
}

/* ---------- taskbar ---------- */

function OfficeIcon({ letter, tones, tile }: { letter: string; tones: string[]; tile: string }) {
  return (
    <svg width="48" height="44" viewBox="0 0 48 44">
      <rect x="12" y="0.500" width="36" height="43" rx="2.500" fill={tones[0]} />
      <path d="M12 11H48V22H12Z" fill={tones[1]} />
      <path d="M12 22H48V33H12Z" fill={tones[2]} />
      <path d="M12 33H48V41Q48 43.500 45.500 43.500H14.500Q12 43.500 12 41Z" fill={tones[3]} />
      <rect x="0" y="10" width="25" height="24" rx="2" fill={tile} />
      <text x="12.500" y="28.500" textAnchor="middle" fontFamily="'Open Sans'" fontSize="18" fontWeight="700" fill="white">
        {letter}
      </text>
    </svg>
  );
}

const apps: { icon: React.ReactNode; mark?: string; active?: boolean }[] = [
  {
    icon: (
      <svg width="46" height="46" viewBox="0 0 46 46">
        <defs>
          <linearGradient id="win" x1="0" y1="0" x2="46" y2="46" gradientUnits="userSpaceOnUse">
            <stop offset="0" stopColor="#8fe1fd" />
            <stop offset="0.500" stopColor="#3fc1fb" />
            <stop offset="1" stopColor="#0794f5" />
          </linearGradient>
        </defs>
        <path d="M1 0H22V22H0V1ZM24 0H45L46 1V22H24ZM0 24H22V46H1L0 45ZM24 24H46V45L45 46H24Z" fill="url(#win)" />
      </svg>
    ),
  },
  {
    icon: (
      <svg width="46" height="46" viewBox="0 0 46 46" fill="#4a4647" stroke="#e3e3e3">
        <path d="M16 30 5 42" strokeWidth="5" strokeLinecap="round" />
        <circle cx="26.500" cy="19" r="16.500" strokeWidth="4" />
      </svg>
    ),
  },
  {
    icon: (
      <svg width="46" height="46" viewBox="0 0 46 46">
        <defs>
          <linearGradient id="chat" x1="0" y1="0" x2="1" y2="1">
            <stop offset="0" stopColor="#9a79b8" />
            <stop offset="0.500" stopColor="#6264c7" />
            <stop offset="1" stopColor="#4f52c4" />
          </linearGradient>
        </defs>
        <path d="M23 0A23 23 0 1 1 12 43.500L1 45 2.500 35A23 23 0 0 1 23 0Z" fill="url(#chat)" />
        <rect x="10" y="14" width="18" height="19" rx="3" fill="white" />
        <path d="M30 20 36 16V31L30 27Z" fill="white" />
      </svg>
    ),
  },
  {
    mark: "w-3",
    icon: (
      <span className="relative block">
        <svg width="46" height="46" viewBox="0 0 46 46">
          <circle cx="23" cy="23" r="22.500" fill="#fbbc05" />
          <path d="M23 23 3.500 11.800A22.500 22.500 0 0 1 42.500 11.800Z" fill="#ea4335" />
          <path d="M23 11.500H42.300A22.500 22.500 0 0 1 23 45.500L33 29Z" fill="#fbbc05" />
          <path d="M3.500 11.800A22.500 22.500 0 0 0 23 45.500L32.900 28.700 13 28.700Z" fill="#2a9d49" />
          <circle cx="23" cy="23" r="11.500" fill="white" />
          <circle cx="23" cy="23" r="9.200" fill="#2f7af0" />
        </svg>
        <svg className="absolute -right-[11px] -top-[12px]" width="32" height="32" viewBox="0 0 32 32">
          <defs>
            <radialGradient id="photo" cx="0.600" cy="0.350">
              <stop offset="0" stopColor="#d9dfae" />
              <stop offset="0.450" stopColor="#8fae2f" />
              <stop offset="1" stopColor="#39531a" />
            </radialGradient>
          </defs>
          <circle cx="16" cy="16" r="16" fill="url(#photo)" />
          <path d="M14 18Q20 12 22 20Q24 28 18 30Q12 28 14 18Z" fill="#2f3f1c" />
          <path d="M20 20Q24 20 22 30L18 30Z" fill="#d8d3c0" />
        </svg>
      </span>
    ),
  },
  {
    icon: (
      <svg className="ml-[4px]" width="44" height="46" viewBox="0 0 44 46">
        <path d="M3 2 31 0 42 8V42L38 44 13 46 1 38V5Z" fill="#111" stroke="white" strokeWidth="1.200" />
        <path d="M5 4.500 30 2.500 36 7 13 9Z" fill="white" />
        <path d="M11 14 39 11V41L11 43Z" fill="white" />
        <path d="M16 19 22 18.500 32 32V20L29 19.500V17.500L37 17V19L35 19.700V38L31 38.500 20 23V36L23 37V39L15 39.500V37.500L17.500 36.500V21.500L16 21Z" fill="#111" />
      </svg>
    ),
  },
  {
    icon: (
      <span className="flex size-[48px] items-center justify-center rounded-full bg-[#75aadb] font-['Liberation_Serif',serif] text-[32px] leading-none text-white">
        R
      </span>
    ),
  },
  {
    mark: "w-3",
    icon: (
      <svg width="48" height="44" viewBox="0 0 48 44">
        <defs>
          <linearGradient id="folder" x1="0" y1="0" x2="1" y2="1">
            <stop offset="0" stopColor="#ffdc67" />
            <stop offset="1" stopColor="#fcbf2d" />
          </linearGradient>
        </defs>
        <path d="M0 3Q0 1 2 1H15L20 6V12H0Z" fill="#dd9d0c" />
        <path d="M0 8H15L20 5H46Q48 5 48 7V41Q48 43 46 43H2Q0 43 0 41Z" fill="url(#folder)" />
        <path d="M8 43V33Q8 29 12 29H36Q40 29 40 33V43Z" fill="#1082d2" />
        <path d="M15 36H33" stroke="#0a5a9c" strokeWidth="2" />
      </svg>
    ),
  },
  {
    icon: (
      <svg width="30" height="46" viewBox="0 0 30 46">
        <path d="M20 0 28 10 29 24 23 45 4 36 0 24 6 10Z" fill="#5a3ec0" />
        <path d="M20 0 14 18 8 38 0 24 6 10Z" fill="#3c2595" />
        <path d="M20 0 28 10 29 24 14 18Z" fill="#8d76e8" />
        <path d="M14 18 29 24 23 45 8 38Z" fill="#7257d8" />
      </svg>
    ),
  },
  { mark: "w-8", active: true, icon: <OfficeIcon letter="W" tones={["#41a5ee", "#2b7cd3", "#185abd", "#103f91"]} tile="#1a5dbe" /> },
  { mark: "w-3", icon: <OfficeIcon letter="X" tones={["#2bb673", "#21a366", "#107c41", "#185c37"]} tile="#107c41" /> },
];

function Taskbar() {
  return (
    <div className="relative flex h-[96px] shrink-0 items-center bg-linear-to-r from-[#222122] via-[#2a1e1e] to-[#281c1d] text-[23px] text-white">
      <svg className="ml-[40px]" width="48" height="32" viewBox="0 0 48 32">
        <defs>
          <linearGradient id="cloud" x1="0" y1="0" x2="0.600" y2="1">
            <stop offset="0" stopColor="#a9c8f5" />
            <stop offset="1" stopColor="#e9f0fa" />
          </linearGradient>
        </defs>
        <path d="M10 31Q0 30 0 21Q1 13 9 13Q11 0 23 0Q33 0 36 9Q47 9 48 20Q47 30 38 31Z" fill="url(#cloud)" />
        <path d="M9 13Q16 14 17 20M36 9Q28 11 27 18" stroke="#9bbbe8" strokeWidth="1" fill="none" />
      </svg>
      <div className="ml-[14px] leading-[32px]">
        <div>27°C</div>
        <div className="text-[#cfcfcf]">Nublado</div>
      </div>
      <div className="absolute inset-y-0 left-[928px] flex items-center">
        {apps.map((a, i) => (
          <div key={i} className="relative flex h-[80px] w-[88px] items-center justify-center">
            {a.active && <span className="absolute inset-y-0 left-[4px] right-[4px] rounded-lg border border-[#403536] bg-[#352b2c]" />}
            <span className="relative">{a.icon}</span>
            {a.mark && <span className={`${a.mark} absolute bottom-[2px] left-1/2 h-[6px] -translate-x-1/2 rounded-full bg-[#979393]`} />}
          </div>
        ))}
      </div>
      <div className="ml-auto flex items-center">
        <Chevron up w={26} />
        <div className="ml-[34px] w-[58px] text-center leading-[32px] tracking-[-0.200px]">
          ESP
          <br />
          INTL
        </div>
        <svg className="ml-[31px]" width="32" height="26" viewBox="0 0 32 26" fill="none" stroke="white" strokeWidth="2.400">
          <path d="M1 9.500Q16-6 31 9.500M5.500 14Q16 3 26.500 14M10 18.500Q16 12 22 18.500" />
          <circle cx="16" cy="22" r="3" fill="white" stroke="none" />
        </svg>
        <svg className="ml-[16px]" width="34" height="28" viewBox="0 0 34 28" fill="none" stroke="white" strokeWidth="2.200">
          <path d="M1.500 9H6L13 3V25L6 19H1.500ZM17 9Q20 14 17 19M21.500 5Q27 14 21.500 23" />
          <path d="M26.500 1.500Q35 14 26.500 26.500" stroke="#6b6465" />
        </svg>
        <svg className="ml-[14px]" width="32" height="20" viewBox="0 0 32 20" fill="none" stroke="white" strokeWidth="2.400">
          <rect x="1.200" y="1.200" width="26" height="17.600" rx="4" />
          <rect x="5" y="5" width="6" height="10" fill="white" stroke="none" />
          <path d="M29.500 6.500V13.500" strokeWidth="4" />
        </svg>
        <div className="mr-[38px] w-[154px] text-right leading-[32px]">
          03:52 p. m.
          <br />
          26/08/2022
        </div>
      </div>
    </div>
  );
}

export default function App() {
  return (
    <div className="flex h-[1824px] w-[2736px] flex-col overflow-hidden font-['Open_Sans','Noto_Sans',sans-serif]">
      <TitleBar />
      <Ribbon />
      <Document />
      <StatusBar />
      <Taskbar />
    </div>
  );
}
